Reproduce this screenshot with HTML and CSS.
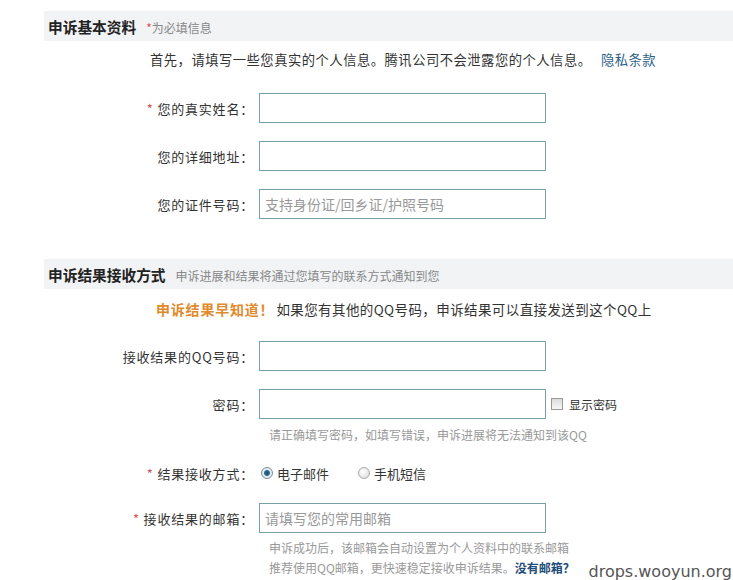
FILE: index.html
```html
<!DOCTYPE html>
<html lang="zh-CN">
<head>
    <meta charset="UTF-8">
    <title>申诉基本资料</title>
    <link rel="stylesheet" href="styles.css">
</head>
<body>
    <div class="appeal-form">
        <div class="section-head">
            <h3>申诉基本资料</h3>
            <span class="section-tip"><em class="star">*</em>为必填信息</span>
        </div>
        <p class="intro">首先，请填写一些您真实的个人信息。腾讯公司不会泄露您的个人信息。 <a href="#" class="link">隐私条款</a></p>

        <div class="row first">
            <label><em class="star">*</em> 您的真实姓名：</label>
            <input type="text" class="text-input">
        </div>
        <div class="row">
            <label>您的详细地址：</label>
            <input type="text" class="text-input">
        </div>
        <div class="row">
            <label>您的证件号码：</label>
            <input type="text" class="text-input" placeholder="支持身份证/回乡证/护照号码">
        </div>

        <div class="section-head second">
            <h3>申诉结果接收方式</h3>
            <span class="section-tip">申诉进展和结果将通过您填写的联系方式通知到您</span>
        </div>
        <p class="notice"><strong>申诉结果早知道！</strong>如果您有其他的QQ号码，申诉结果可以直接发送到这个QQ上</p>

        <div class="row first-qq">
            <label>接收结果的QQ号码：</label>
            <input type="text" class="text-input">
        </div>
        <div class="row">
            <label>密码：</label>
            <input type="password" class="text-input">
            <span class="check"><input type="checkbox" class="checkbox"> 显示密码</span>
        </div>
        <p class="hint pwd-hint">请正确填写密码，如填写错误，申诉进展将无法通知到该QQ</p>

        <div class="row radio-row">
            <label><em class="star">*</em> 结果接收方式：</label>
            <div class="radios">
                <span class="radio-item"><input type="radio" name="way" class="radio" checked> 电子邮件</span>
                <span class="radio-item"><input type="radio" name="way" class="radio"> 手机短信</span>
            </div>
        </div>
        <div class="row email-row">
            <label><em class="star">*</em> 接收结果的邮箱：</label>
            <input type="text" class="text-input" placeholder="请填写您的常用邮箱">
        </div>
        <p class="hint mail-hint">申诉成功后，该邮箱会自动设置为个人资料中的联系邮箱<br>推荐使用QQ邮箱，更快速稳定接收申诉结果。<a href="#" class="no-mail">没有邮箱？</a></p>
    </div>

    <div class="watermark">drops.wooyun.org</div>
</body>
</html>
```

FILE: styles.css
```css
body {
    margin: 0;
    padding: 11px 0 0 44px;
    font-family: "Noto Sans CJK SC", "Liberation Sans", sans-serif;
    font-size: 13px;
    color: #333;
    background: #fff;
    position: relative;
    height: 569px;
    overflow: hidden;
}
.section-head {
    height: 30px;
    background: #f1f3f5;
    display: flex;
    align-items: center;
    padding-left: 4px;
}
.section-head h3 {
    margin: 0;
    font-size: 14.7px;
    font-weight: bold;
    color: #222;
}
.section-tip {
    font-size: 12px;
    color: #888;
    margin-left: 10px;
    padding-top: 2px;
}
.star {
    font-style: normal;
    color: #d9534f;
}
.intro {
    margin: 10px 0 0 106px;
    line-height: 18px;
    font-size: 13.3px;
    letter-spacing: 0.5px;
}
.link {
    color: #2c5f86;
    text-decoration: none;
    margin-left: 6px;
}
.row {
    display: grid;
    grid-template-columns: 206px 287px auto;
    column-gap: 9px;
    align-items: center;
    height: 30px;
    margin-top: 18px;
}
.row label {
    text-align: right;
    margin-right: -4px;
    letter-spacing: 0.8px;
}
.row.first {
    margin-top: 24px;
}
.text-input {
    box-sizing: border-box;
    width: 287px;
    height: 30px;
    border: 1px solid #789fa7;
    padding: 0 5px;
    font-family: inherit;
    font-size: 14px;
    color: #333;
    outline: none;
}
.text-input::placeholder {
    color: #999;
}
.section-head.second {
    margin-top: 40px;
}
.notice {
    margin: 11px 0 0 112px;
    line-height: 18px;
    font-size: 13.5px;
    letter-spacing: 0.4px;
}
.notice strong {
    color: #e08a2c;
    font-size: 14px;
    letter-spacing: 0.8px;
    margin-right: 2px;
}
.row.first-qq {
    margin-top: 23px;
}
.check {
    display: flex;
    align-items: center;
    gap: 6px;
    font-size: 12px;
    margin-left: -4px;
}
.checkbox {
    appearance: none;
    margin: 0;
    width: 12px;
    height: 12px;
    border: 1px solid #999;
    background: linear-gradient(#dcdcdc, #f7f7f7);
    box-sizing: border-box;
}
.hint {
    margin: 0 0 0 225px;
    font-size: 12px;
    color: #999;
}
.pwd-hint {
    margin-top: 8px;
    line-height: 16px;
}
.row.radio-row {
    height: 20px;
    margin-top: 20px;
}
.radios {
    display: flex;
    grid-column: 2 / 4;
    gap: 27px;
}
.radio-item {
    display: flex;
    align-items: center;
    gap: 4px;
    margin-left: 2px;
}
.radio {
    appearance: none;
    margin: 0;
    width: 12px;
    height: 12px;
    border-radius: 50%;
    border: 1px solid #aaa;
    background: radial-gradient(circle at 40% 40%, #fff, #d8d8d8);
    box-sizing: border-box;
}
.radio:checked {
    border-color: #7d8f9c;
    background: radial-gradient(circle, #1d4f73 0, #2f6b94 2.5px, #e8eef2 3.5px, #cfd8de 100%);
}
.row.email-row {
    margin-top: 20px;
}
.mail-hint {
    margin-top: 5px;
    line-height: 20px;
}
.no-mail {
    color: #1f4d78;
    font-weight: bold;
    text-decoration: none;
}
.watermark {
    position: absolute;
    right: 1px;
    bottom: -1px;
    font-family: "DejaVu Sans", sans-serif;
    font-size: 16px;
    color: #555;
}
```
